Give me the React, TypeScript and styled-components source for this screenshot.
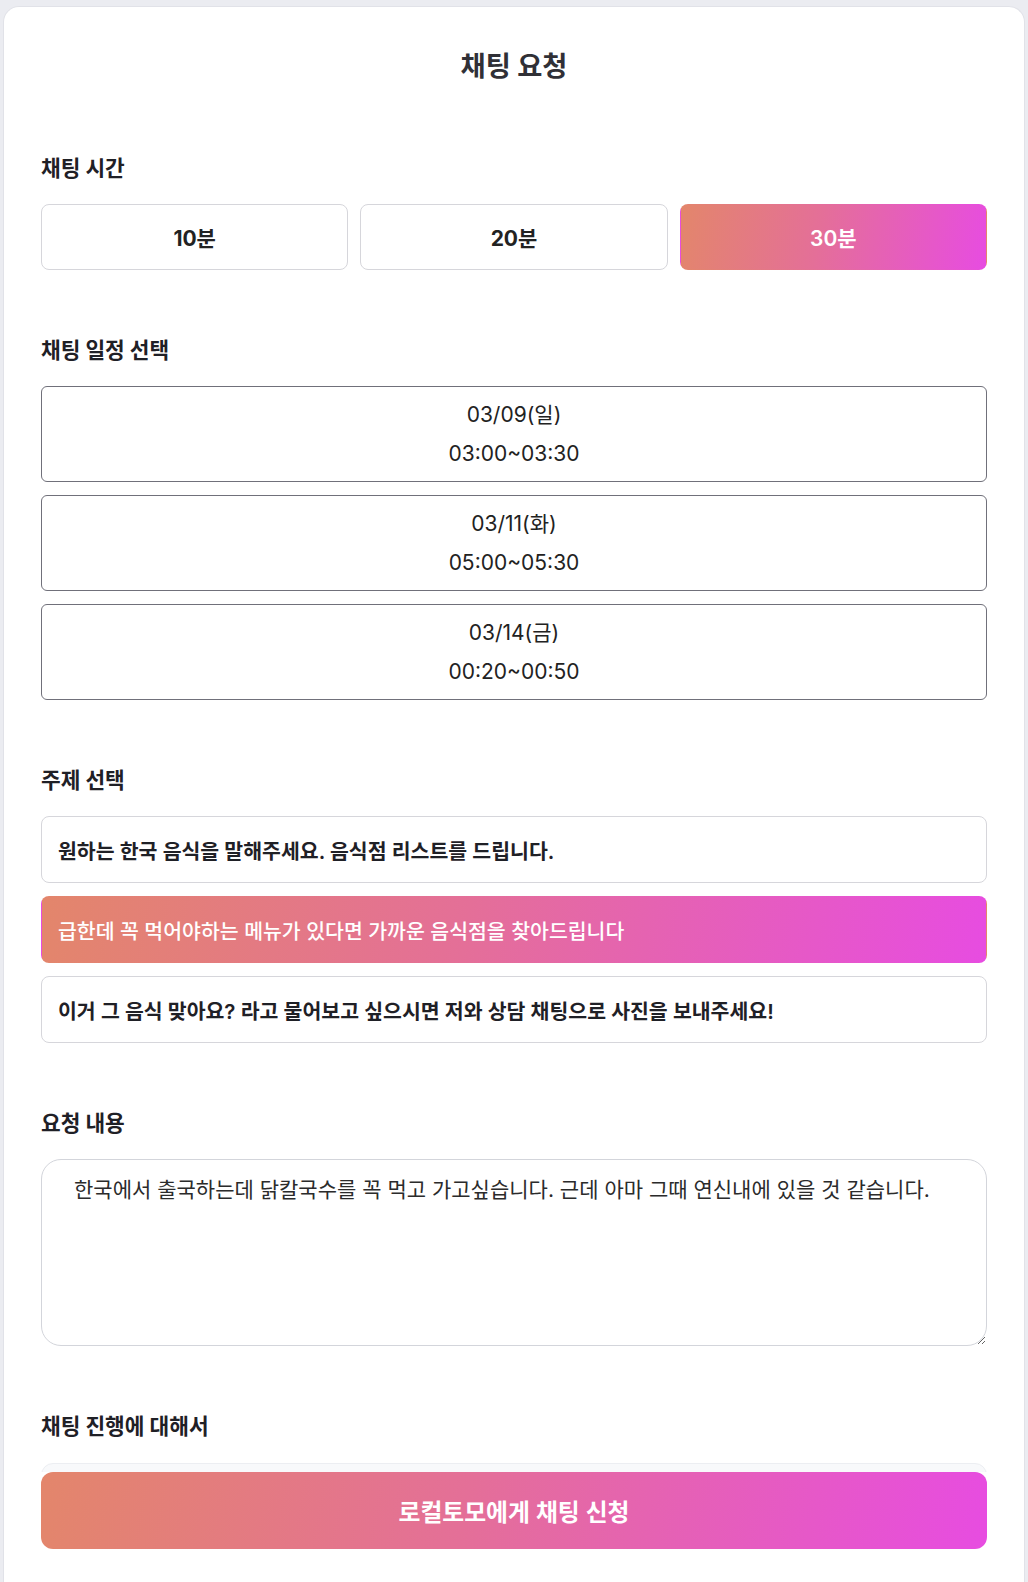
import React, { useEffect, useRef, useState } from "react";
import styled, { createGlobalStyle, css } from "styled-components";

const GlobalStyle = createGlobalStyle`
  html, body {
    margin: 0;
    padding: 0;
    height: 100%;
    overflow: hidden;
  }
  body {
    background: #ebecf1;
    font-family: Inter, "Noto Sans CJK KR", sans-serif;
    color: #1f2026;
  }
  * { box-sizing: border-box; }
`;

const brandGradient = css`
  background: linear-gradient(100deg, #e3866b 0%, #e46f98 45%, #e74ce1 100%);
`;

const Page = styled.div`
  padding: 6px 3px 0;
`;

const Card = styled.main`
  background: #fff;
  border: 1px solid #e1e2e8;
  border-bottom: none;
  border-radius: 16px 16px 0 0;
  padding: 42px 37px 0;
  min-height: 1700px;
`;

const Title = styled.h1`
  margin: 0 0 69px;
  font-size: 27.3px;
  line-height: 36px;
  font-weight: 700;
  text-align: center;
  color: #303036;
`;

const Sections = styled.div`
  display: flex;
  flex-direction: column;
  gap: 66px;
`;

const Section = styled.section`
  display: flex;
  flex-direction: column;
`;

const Heading = styled.h2`
  margin: 0 0 22px;
  font-size: 21.4px;
  line-height: 28px;
  font-weight: 700;
  color: #1f2026;
`;

const DurationRow = styled.div`
  display: grid;
  grid-template-columns: repeat(3, 1fr);
  gap: 12px;
`;

const DurationButton = styled.button<{ $active?: boolean }>`
  height: 66px;
  border: 1px solid #d6d6db;
  border-radius: 8px;
  background: #fff;
  font-family: inherit;
  font-size: 21px;
  font-weight: 700;
  color: #222;
  cursor: pointer;
  ${(p) =>
    p.$active &&
    css`
      ${brandGradient};
      border-color: transparent;
      color: #fff;
      font-weight: 600;
    `}
`;

const ScheduleList = styled.div`
  display: flex;
  flex-direction: column;
  gap: 13px;
`;

const ScheduleCard = styled.button`
  display: flex;
  flex-direction: column;
  align-items: center;
  padding: 8px;
  border: 1px solid #70707a;
  border-radius: 6px;
  background: #fff;
  font-family: inherit;
  font-size: 21px;
  line-height: 39px;
  font-weight: 400;
  color: #222;
  cursor: pointer;
`;

const TopicList = styled.div`
  display: flex;
  flex-direction: column;
  gap: 13px;
`;

const TopicItem = styled.button<{ $active?: boolean }>`
  display: flex;
  align-items: center;
  height: 67px;
  padding: 0 16px;
  border: 1px solid #d6d6db;
  border-radius: 8px;
  background: #fff;
  font-family: inherit;
  font-size: 20.5px;
  font-weight: 600;
  color: #1f2026;
  text-align: left;
  cursor: pointer;
  ${(p) =>
    p.$active &&
    css`
      ${brandGradient};
      border-color: transparent;
      color: #fff;
      font-weight: 500;
    `}
`;

const RequestArea = styled.textarea`
  display: block;
  width: 100%;
  height: 187px;
  padding: 16px 32px;
  border: 1px solid #d3d5db;
  border-radius: 20px;
  background: #fff;
  font-family: inherit;
  font-size: 21px;
  line-height: 28px;
  font-weight: 400;
  color: #2b2b2b;
  caret-color: #111;
  resize: vertical;
  outline: none;
`;

const InfoBox = styled.div`
  margin-top: 1px;
  height: 200px;
  background: #f8f9fb;
  border: 1px solid #eceef2;
  border-radius: 12px;
`;

const Footer = styled.div`
  position: fixed;
  left: 41px;
  right: 41px;
  bottom: 0;
  padding-bottom: 33px;
  background: #fff;
`;

const SubmitButton = styled.button`
  display: block;
  width: 100%;
  height: 77px;
  border: none;
  border-radius: 12px;
  ${brandGradient};
  font-family: inherit;
  font-size: 23.8px;
  font-weight: 600;
  color: #fff;
  cursor: pointer;
`;

const durations = ["10분", "20분", "30분"];
const schedules = [
  { date: "03/09(일)", time: "03:00~03:30" },
  { date: "03/11(화)", time: "05:00~05:30" },
  { date: "03/14(금)", time: "00:20~00:50" },
];
const topics = [
  "원하는 한국 음식을 말해주세요. 음식점 리스트를 드립니다.",
  "급한데 꼭 먹어야하는 메뉴가 있다면 가까운 음식점을 찾아드립니다",
  "이거 그 음식 맞아요? 라고 물어보고 싶으시면 저와 상담 채팅으로 사진을 보내주세요!",
];
const requestText =
  "한국에서 출국하는데 닭칼국수를 꼭 먹고 가고싶습니다. 근데 아마 그때 연신내에 있을 것 같습니다.";

export default function App() {
  const [duration, setDuration] = useState(2);
  const [topic, setTopic] = useState(1);
  const areaRef = useRef<HTMLTextAreaElement>(null);

  useEffect(() => {
    const el = areaRef.current;
    if (el) {
      el.focus();
      el.setSelectionRange(el.value.length, el.value.length);
    }
  }, []);

  return (
    <Page>
      <GlobalStyle />
      <Card>
        <Title>채팅 요청</Title>
        <Sections>
          <Section>
            <Heading>채팅 시간</Heading>
            <DurationRow>
              {durations.map((d, i) => (
                <DurationButton key={d} $active={i === duration} onClick={() => setDuration(i)}>
                  {d}
                </DurationButton>
              ))}
            </DurationRow>
          </Section>
          <Section>
            <Heading>채팅 일정 선택</Heading>
            <ScheduleList>
              {schedules.map((s) => (
                <ScheduleCard key={s.date}>
                  <span>{s.date}</span>
                  <span>{s.time}</span>
                </ScheduleCard>
              ))}
            </ScheduleList>
          </Section>
          <Section>
            <Heading>주제 선택</Heading>
            <TopicList>
              {topics.map((t, i) => (
                <TopicItem key={i} $active={i === topic} onClick={() => setTopic(i)}>
                  {t}
                </TopicItem>
              ))}
            </TopicList>
          </Section>
          <Section>
            <Heading>요청 내용</Heading>
            <RequestArea ref={areaRef} defaultValue={requestText} />
          </Section>
          <Section>
            <Heading>채팅 진행에 대해서</Heading>
            <InfoBox />
          </Section>
        </Sections>
      </Card>
      <Footer>
        <SubmitButton>로컬토모에게 채팅 신청</SubmitButton>
      </Footer>
    </Page>
  );
}
